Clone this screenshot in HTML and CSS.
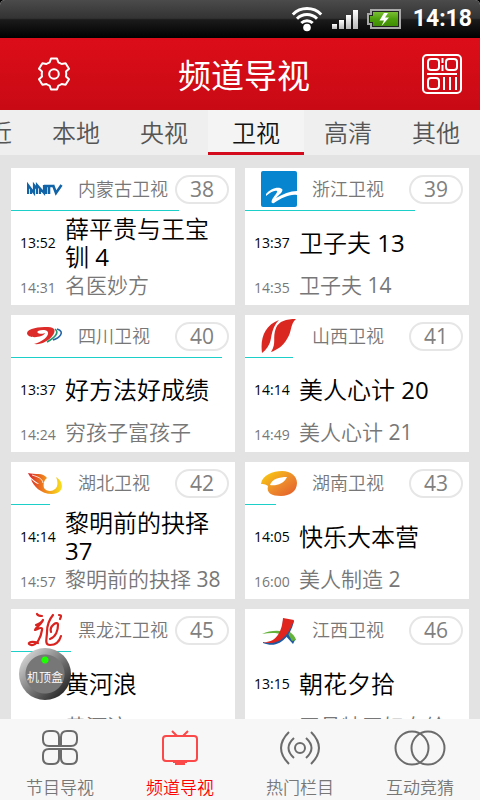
FILE: index.html
```
<!DOCTYPE html>
<html lang="zh-CN">
<head>
<meta charset="utf-8">
<meta name="viewport" content="width=device-width, initial-scale=1">
<title>频道导视</title>
<link rel="stylesheet" href="styles.css">
</head>
<body>
<div class="app">
  <div class="status">
    <svg class="wifi" width="32" height="26" viewBox="0 0 32 26" fill="none" stroke="#fff" stroke-width="3">
      <path d="M1.800 8.500A20 20 0 0 1 30.200 8.500"/><path d="M6 12.800A14 14 0 0 1 26 12.800"/><path d="M10.300 17A8.200 8.200 0 0 1 21.700 17"/>
      <circle cx="16" cy="21.500" r="3.800" fill="#fff" stroke="none"/>
    </svg>
    <svg class="signal" width="26" height="20" viewBox="0 0 26 20">
      <defs><linearGradient id="sig" x1="0" y1="0" x2="0" y2="1"><stop offset="0" stop-color="#fff"/><stop offset="1" stop-color="#b8b8b8"/></linearGradient></defs>
      <g fill="url(#sig)"><rect x="0" y="15" width="5" height="5"/><rect x="7" y="11" width="5" height="9"/><rect x="14" y="6" width="5" height="14"/><rect x="21" y="1" width="5" height="19"/></g>
    </svg>
    <svg class="battery" width="34" height="20" viewBox="0 0 34 20">
      <defs><linearGradient id="bat" x1="0" y1="0" x2="0" y2="1"><stop offset="0" stop-color="#7cbf35"/><stop offset=".5" stop-color="#4e9f0c"/><stop offset="1" stop-color="#3f8d05"/></linearGradient></defs>
      <path d="M4 1H33V19H4V15H1V5H4Z" fill="#222" stroke="#a9a9a9" stroke-width="2"/>
      <path d="M6 3H31V17H6V13H3V7H6Z" fill="url(#bat)"/>
      <path d="M17 4L12.500 11.500H17L14.500 17L22 8.500H18L21 4Z" fill="#fff"/>
    </svg>
    <time>14:18</time>
  </div>

  <header class="topbar">
    <button class="icon-btn" type="button" aria-label="设置">
      <svg width="36" height="36" viewBox="0 0 36 36" fill="none" stroke="#fff" stroke-width="2" stroke-linejoin="round">
        <path d="M15 2.500H21L22.300 6.300Q24 7 25.600 8L29.600 7.200L33 12.800L30 15.500Q30.500 18 30 20.500L33 23.200L29.600 28.800L25.600 28Q24 29.200 22.300 29.700L21 33.500H15L13.700 29.700Q12 29.200 10.400 28L6.400 28.800L3 23.200L6 20.500Q5.500 18 6 15.500L3 12.800L6.400 7.200L10.400 8Q12 7 13.700 6.300Z"/>
        <circle cx="18" cy="18" r="4.800"/>
      </svg>
    </button>
    <h1>频道导视</h1>
    <button class="icon-btn" type="button" aria-label="二维码">
      <svg width="40" height="40" viewBox="0 0 40 40" fill="none" stroke="#fff" stroke-width="2">
        <rect x="1" y="1" width="38" height="38" rx="4"/>
        <rect x="6" y="5" width="11" height="11" rx="3"/><rect x="24" y="5" width="11" height="11" rx="3"/><rect x="6" y="24" width="11" height="11" rx="3"/>
        <path d="M20.500 4V9M20.500 11V17M5 20H35M22 23V36M28 23V36M34 23V36"/>
      </svg>
    </button>
  </header>

  <nav class="tabs" aria-label="频道分类">
    <button type="button">最近</button>
    <button type="button">本地</button>
    <button type="button">央视</button>
    <button type="button" class="active">卫视</button>
    <button type="button">高清</button>
    <button type="button">其他</button>
  </nav>

  <main class="channels">
    <article class="card">
      <header class="card-head">
        <svg class="logo" viewBox="0 0 36 36" fill="none" stroke="#1264a8" stroke-width="2">
          <path d="M1 23V14L7 22V14L10 18M4 23V18M10 23V14L17 22V14M13 23V17M19 23V14" stroke-width="2.200"/>
          <path d="M17 15H27M22 15V23M26 14L29 22L34.500 14" stroke-width="2.600"/>
        </svg>
        <h2>内蒙古卫视</h2><span class="num">38</span>
      </header>
      <div class="track"><div class="bar" style="width:75%"></div></div>
      <div class="now"><time>13:52</time><p>薛平贵与王宝钏 4</p></div>
      <div class="next"><time>14:31</time><p>名医妙方</p></div>
    </article>

    <article class="card">
      <header class="card-head">
        <svg class="logo" viewBox="0 0 36 36">
          <rect width="36" height="36" rx="2" fill="#0785cf"/>
          <path d="M5 23C9 18 17 15 21 18C23 20 18 24 15 27C22 23 29 20 36 20V24C28 23 21 27 13 32C10 33 10 30 12 27C14 24 17 21 16 20C13 19 9 22 5 25Z" fill="#fff"/>
        </svg>
        <h2>浙江卫视</h2><span class="num">39</span>
      </header>
      <div class="track"><div class="bar" style="width:76%"></div></div>
      <div class="now"><time>13:37</time><p>卫子夫 13</p></div>
      <div class="next"><time>14:35</time><p>卫子夫 14</p></div>
    </article>

    <article class="card">
      <header class="card-head">
        <svg class="logo" viewBox="0 0 36 36">
          <path d="M0 15C1 10 12 9 21 9C28 9 29 13 26 17C22 23 14 27 7 26C14 24 20 20 21 16C22 12 16 11 11 13C9 15 13 17 18 15C16 20 0 21 0 15Z" fill="#dc2b28"/>
          <path d="M28 11C33 15 27 20 20 24" fill="none" stroke="#239570" stroke-width="1.600"/>
          <path d="M30 11C39 14 32 20 26 22" fill="none" stroke="#2464aa" stroke-width="1.600"/>
        </svg>
        <h2>四川卫视</h2><span class="num">40</span>
      </header>
      <div class="track"><div class="bar" style="width:94%"></div></div>
      <div class="now"><time>13:37</time><p>好方法好成绩</p></div>
      <div class="next"><time>14:24</time><p>穷孩子富孩子</p></div>
    </article>

    <article class="card">
      <header class="card-head">
        <svg class="logo" viewBox="0 0 36 36" fill="#da2720">
          <path d="M1 35C-1 20 4 7 18 2C12 8 11 15 10 20C9 27 5 32 1 35Z"/>
          <path d="M10 34C16 25 11 20 15 10C18 3 25 1 35 1C29 6 31 14 26 21C22 28 16 32 10 34Z"/>
        </svg>
        <h2>山西卫视</h2><span class="num">41</span>
      </header>
      <div class="track"><div class="bar" style="width:21.500%"></div></div>
      <div class="now"><time>14:14</time><p>美人心计 20</p></div>
      <div class="next"><time>14:49</time><p>美人心计 21</p></div>
    </article>

    <article class="card">
      <header class="card-head">
        <svg class="logo" viewBox="0 0 36 36">
          <defs><linearGradient id="hb" x1="0" y1="0" x2="1" y2="0"><stop offset="0" stop-color="#d9232a"/><stop offset=".5" stop-color="#f08a1c"/><stop offset="1" stop-color="#f9e21c"/></linearGradient></defs>
          <path d="M1 8C8 10 16 7 20 13C17 15 16 19 17 23C21 29 35 26 29 12C38 17 37 29 25 29C14 29 6 21 4 14C7 17 10 19 12 19C8 16 3 13 1 8Z" fill="url(#hb)"/>
          <path d="M5 10C11 12 15 13 16 18" fill="none" stroke="#fff" stroke-width=".8"/>
        </svg>
        <h2>湖北卫视</h2><span class="num">42</span>
      </header>
      <div class="track"><div class="bar" style="width:17.500%"></div></div>
      <div class="now"><time>14:14</time><p>黎明前的抉择 37</p></div>
      <div class="next"><time>14:57</time><p>黎明前的抉择 38</p></div>
    </article>

    <article class="card">
      <header class="card-head">
        <svg class="logo" viewBox="0 0 36 36">
          <defs><linearGradient id="hn" x1="0" y1="0" x2="1" y2="1"><stop offset="0" stop-color="#fbd50a"/><stop offset=".55" stop-color="#ed8a2c"/><stop offset="1" stop-color="#e3592a"/></linearGradient></defs>
          <path fill-rule="evenodd" d="M0 19C1 10 12 6 21 6C30 6 36 11 36 18C36 26 29 31 20 31C11 31 5 28 7 21C4 19 2 19 0 19ZM9 20C15 21 23 19 26 12C18 12 11 14 9 20Z" fill="url(#hn)"/>
        </svg>
        <h2>湖南卫视</h2><span class="num">43</span>
      </header>
      <div class="track"><div class="bar" style="width:14%"></div></div>
      <div class="now"><time>14:05</time><p>快乐大本营</p></div>
      <div class="next"><time>16:00</time><p>美人制造 2</p></div>
    </article>

    <article class="card">
      <header class="card-head">
        <svg class="logo" viewBox="0 0 36 36" fill="none" stroke="#d9231f" stroke-width="2.200" stroke-linecap="round" stroke-linejoin="round">
          <path d="M10 2C11 4 13 4 15 4M9 13C12 12 15 10 16 8C15 12 9 15 8 18C11 17 16 14 15 18C14 25 10 34 4 33C-1 32 3 28 11 31"/>
          <path d="M26 3C21 9 20 14 20 20C20 26 17 33 23 33C28 33 32 31 34 24M32 3C35 3 34 5 33 7M24 20C22 14 31 8 31 13C31 18 29 25 23 27"/>
        </svg>
        <h2>黑龙江卫视</h2><span class="num">45</span>
      </header>
      <div class="track"><div class="bar" style="width:27%"></div></div>
      <div class="now"><time></time><p>黄河浪</p></div>
      <div class="next"><time></time><p>黄河浪</p></div>
    </article>

    <article class="card">
      <header class="card-head">
        <svg class="logo" viewBox="0 0 36 36">
          <path d="M1 22C12 17 28 17 35 28L31 29C23 20 12 20 1 22Z" fill="#66b33c"/>
          <path d="M22 21L25 18L34 28L32 32Z" fill="#1f5aa0"/>
          <path d="M25 18C30 20 34 24 35 28L31 29Z" fill="#66b33c"/>
          <path d="M2 30C14 33 21 24 22 8L23 7L33 9C30 23 19 38 2 31Z" fill="#1f5aa0"/>
          <path d="M2 30C15 31 21 20 22 6L33 8C29 21 19 35 2 30Z" fill="#e0251f"/>
        </svg>
        <h2>江西卫视</h2><span class="num">46</span>
      </header>
      <div class="track"></div>
      <div class="now"><time>13:15</time><p>朝花夕拾</p></div>
      <div class="next"><time></time><p>王昌特王妇女给</p></div>
    </article>
  </main>

  <button class="stb" type="button"><span>机顶盒</span></button>

  <nav class="bottom" aria-label="主导航">
    <a href="#programs">
      <svg width="36" height="36" viewBox="0 0 36 36" fill="none" stroke="#6b6b6b" stroke-width="2">
        <path d="M7 1H11Q17 1 17 7V16H7Q1 16 1 10V7Q1 1 7 1ZM25 1H29Q35 1 35 7V10Q35 16 29 16H19V7Q19 1 25 1ZM7 19H17V28Q17 34 11 34H7Q1 34 1 28V25Q1 19 7 19ZM19 19H29Q35 19 35 25V28Q35 34 29 34H25Q19 34 19 28Z"/>
      </svg>
      节目导视
    </a>
    <a href="#channels" class="active" aria-current="page">
      <svg width="36" height="36" viewBox="0 0 36 36" fill="none" stroke="#fb4848" stroke-width="2">
        <rect x="1" y="6" width="34" height="25" rx="3"/><path d="M10 1L15 6M26 1L21 6"/><path d="M11 32H25M13 34H23"/>
      </svg>
      频道导视
    </a>
    <a href="#hot">
      <svg width="40" height="36" viewBox="0 0 40 36" fill="none" stroke="#6b6b6b" stroke-width="2">
        <circle cx="20" cy="18" r="5"/><path d="M14 8Q3 18 14 28M26 8Q37 18 26 28M9 2Q-7 18 9 34M31 2Q47 18 31 34"/>
      </svg>
      热门栏目
    </a>
    <a href="#quiz">
      <svg width="52" height="36" viewBox="0 0 52 36" fill="none" stroke="#6b6b6b" stroke-width="2">
        <circle cx="18" cy="18" r="16.500"/><circle cx="34" cy="18" r="16.500"/>
      </svg>
      互动竞猜
    </a>
  </nav>
</div>
</body>
</html>
```
FILE: styles.css
```
* { box-sizing: border-box; }
body {
  margin: 0;
  font-family: "Open Sans", "Noto Sans CJK SC DemiLight", "Noto Sans CJK SC Light", "Noto Sans CJK SC", sans-serif;
  color: #000;
  background: #e3e3e3;
}
h1, h2, p { margin: 0; font-weight: 400; }
button { margin: 0; padding: 0; border: 0; background: none; font-family: inherit; cursor: pointer; }
svg { display: block; flex: none; }

.app { position: relative; display: flex; flex-direction: column; height: 100vh; overflow: hidden; }

.status {
  display: flex;
  flex: none;
  align-items: center;
  justify-content: flex-end;
  height: 38px;
  padding-right: 8px;
  gap: 9px;
  background: linear-gradient(#4b4b4b, #333 48%, #1b1b1b 52%, #000);
  border-radius: 5px 5px 0 0;
  color: #fff;
  font: 700 23px/38px Roboto, sans-serif;
  box-shadow: 0 -5px 0 5px #000;
}
.status time { margin-left: 3px; }

.topbar {
  display: flex;
  flex: none;
  align-items: center;
  justify-content: space-between;
  height: 72px;
  padding: 0 18px 0 34px;
  background: linear-gradient(#dc0d18, #c80a15);
  color: #fff;
  z-index: 1;
}
.topbar h1 { flex: 1; padding-right: 8px; font-family: "Noto Sans CJK SC", sans-serif; font-size: 33px; line-height: 40px; text-align: center; }
.icon-btn { display: grid; place-items: center; width: 40px; height: 40px; }

.tabs {
  display: flex;
  flex: none;
  justify-content: flex-end;
  height: 45px;
  overflow: hidden;
  background: #efefef;
}
.tabs button { flex: none; padding: 4px 20px 0; font-size: 24px; line-height: 38px; color: #555; border-bottom: 3px solid transparent; }
.tabs .active { padding: 4px 24px 0; color: #111; background: #f4f4f4; border-bottom-color: #d20a1b; }

.channels {
  display: grid;
  flex: 1;
  grid-template-columns: 1fr 1fr;
  grid-auto-rows: max-content;
  gap: 10px;
  min-height: 0;
  padding: 13px 11px 0;
  overflow: hidden;
}
.card { background: #fff; min-width: 0; }
.card-head { display: flex; align-items: center; height: 42px; padding: 0 6px 0 16px; }
.logo { width: 36px; height: 36px; margin-right: 15px; }
.card-head h2 { flex: 1; font-size: 18px; line-height: 24px; color: #777; white-space: nowrap; }
.num {
  flex: none;
  width: 54px;
  height: 29px;
  border: 2px solid #e6e6e6;
  border-radius: 15px;
  font-size: 21px;
  line-height: 25px;
  text-align: center;
  color: #808080;
}
.track { height: 1px; }
.bar { height: 1px; background: #1ccfc9; }
.now, .next { display: grid; grid-template-columns: 45px 1fr; align-items: center; padding: 0 9px; }
.now { height: 64px; }
.now p { font-size: 24px; line-height: 28px; }
.next { height: 30px; align-items: baseline; align-content: start; color: #777; white-space: nowrap; }
.next p { font-size: 21px; line-height: 20px; }
.card time { font-size: 14px; line-height: 18px; }

.stb {
  position: absolute;
  left: 19px;
  bottom: 100px;
  display: grid;
  place-items: center;
  width: 52px;
  height: 52px;
  border-radius: 50%;
  background:
    radial-gradient(circle at 26px 12px, #1bff00 3px, transparent 4px),
    radial-gradient(circle, #777 19px, transparent 20px),
    linear-gradient(135deg, #d8d8d8 10%, #888 45%, #222 90%);
  color: #fff;
  font-size: 12px;
  line-height: 16px;
}
.stb span { padding-top: 8px; }

.bottom {
  display: grid;
  flex: none;
  grid-template-columns: repeat(4, 1fr);
  height: 81px;
  background: #f7f7f7;
}
.bottom a {
  display: flex;
  flex-direction: column;
  align-items: center;
  gap: 10px;
  padding-top: 11px;
  font-size: 17px;
  line-height: 24px;
  color: #777;
  text-decoration: none;
}
.bottom .active { color: #f00; }
```
